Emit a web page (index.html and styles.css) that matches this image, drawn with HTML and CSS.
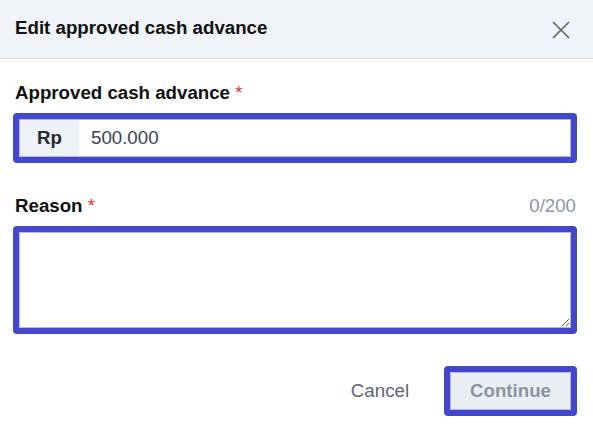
FILE: index.html
```html
<!DOCTYPE html>
<html>
<head>
  <meta charset="UTF-8">
  <title>Edit approved cash advance</title>
  <link rel="stylesheet" href="styles.css">
</head>
<body>
  <div class="modal">
    <!-- Header -->
    <div class="modal-header">
      <h2 class="modal-title">Edit approved cash advance</h2>
      <button class="close-btn" aria-label="Close">
        <svg width="18" height="18" viewBox="0 0 18 18">
          <path d="M1 1 L17 17 M17 1 L1 17" stroke="#5f6673" stroke-width="1.7" fill="none"/>
        </svg>
      </button>
    </div>
    <!-- Body -->
    <div class="modal-body">
      <div class="field">
        <label class="field-label">Approved cash advance <span class="req">*</span></label>
        <div class="focus-box">
          <div class="input-row">
            <span class="addon">Rp</span>
            <input class="text-input" type="text" value="500.000">
          </div>
        </div>
      </div>
      <div class="field">
        <div class="label-row">
          <label class="field-label">Reason <span class="req">*</span></label>
          <span class="counter">0/200</span>
        </div>
        <div class="focus-box">
          <div class="input-row">
            <textarea class="text-area"></textarea>
          </div>
        </div>
      </div>
      <!-- Actions -->
      <div class="actions">
        <button class="btn-cancel">Cancel</button>
        <button class="btn-continue"><span class="btn-inner">Continue</span></button>
      </div>
    </div>
  </div>
</body>
</html>
```

FILE: styles.css
```css
/* Global */
body {
  margin: 0;
  font-family: "Liberation Sans", Arial, sans-serif;
  background: #fff;
  color: #111;
}
.modal {
  width: 593px;
}
/* Header */
.modal-header {
  display: flex;
  justify-content: space-between;
  align-items: center;
  height: 58px;
  padding: 0 23px 0 15px;
  background: #f0f3f8;
  border-bottom: 1px solid #d5dae2;
}
.modal-title {
  margin: 0 0 3px;
  font-size: 18.7px;
  font-weight: bold;
  color: #111;
}
.close-btn {
  display: flex;
  padding: 0;
  margin-top: 2px;
  border: none;
  background: none;
  cursor: pointer;
}
/* Body */
.modal-body {
  padding: 23px 16px 0 13px;
}
.field + .field {
  margin-top: 32px;
}
.field-label {
  display: block;
  margin: 0 0 10px 2px;
  font-size: 18.7px;
  line-height: 21px;
  font-weight: bold;
  color: #111;
}
.req {
  color: #e5392f;
  font-weight: normal;
}
.label-row {
  display: flex;
  justify-content: space-between;
  align-items: baseline;
}
.counter {
  font-size: 18.7px;
  color: #8c95a3;
  margin-right: 1px;
}
/* Focused input box */
.focus-box {
  border: 6px solid #4347cc;
  border-radius: 4px;
}
.input-row {
  display: flex;
  border: 1px solid #b3b6ea;
  background: #fff;
}
.addon {
  display: flex;
  align-items: center;
  justify-content: center;
  width: 59px;
  height: 36px;
  background: #eef1f5;
  font-size: 18.7px;
  font-weight: bold;
  color: #262b33;
}
.text-input {
  flex: 1;
  height: 36px;
  padding: 0 12px;
  border: none;
  outline: none;
  font-family: inherit;
  font-size: 18.7px;
  color: #3c4350;
}
.text-area {
  flex: 1;
  height: 94px;
  padding: 8px 12px;
  box-sizing: border-box;
  border: none;
  outline: none;
  resize: vertical;
  font-family: inherit;
  font-size: 18.7px;
}
/* Actions */
.actions {
  display: flex;
  justify-content: flex-end;
  align-items: center;
  margin-top: 32px;
}
.btn-cancel {
  margin-right: 35px;
  padding: 0;
  border: none;
  background: none;
  font-family: inherit;
  font-size: 18.7px;
  color: #5d6675;
  cursor: pointer;
}
.btn-continue {
  padding: 0;
  border: 6px solid #4347cc;
  border-radius: 4px;
  background: none;
  cursor: pointer;
}
.btn-inner {
  display: flex;
  align-items: center;
  height: 36px;
  padding: 0 19px;
  border: 1px solid #b3b6ea;
  background: #ebeef2;
  font-family: "Liberation Sans", Arial, sans-serif;
  font-size: 18.7px;
  font-weight: bold;
  color: #8b94a3;
}
```
